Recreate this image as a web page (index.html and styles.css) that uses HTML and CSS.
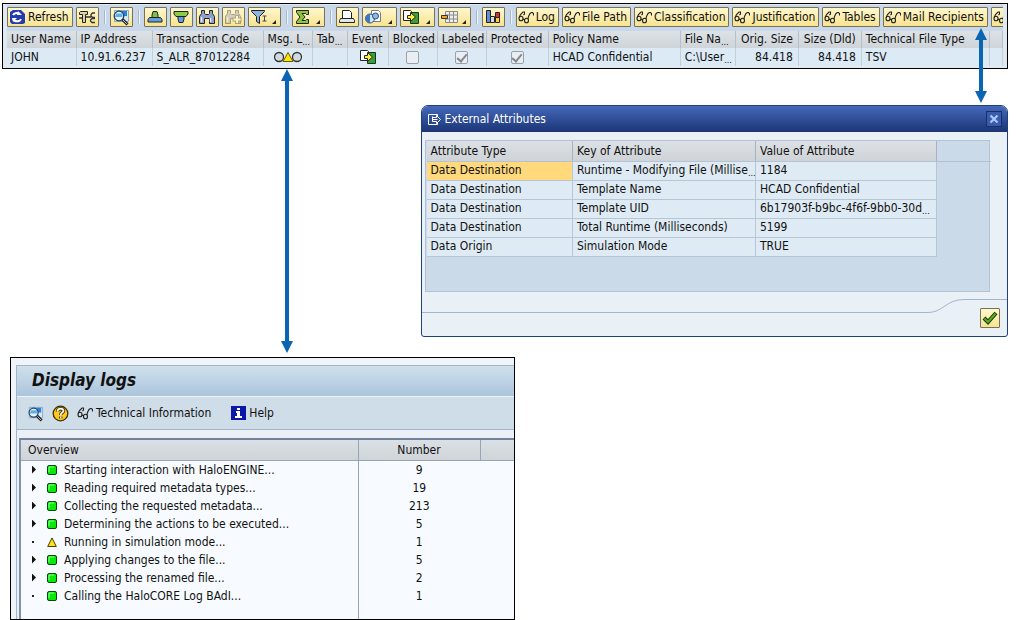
FILE: index.html
```
<!DOCTYPE html>
<html lang="en">
<head>
    <meta charset="UTF-8">
    <title>Display logs</title>
    <link rel="stylesheet" href="styles.css">
</head>
<body>
<!-- shared icons -->
<svg class="sprite" width="0" height="0">
    <symbol id="glasses" viewBox="0 0 16 14">
        <g fill="none" stroke="#222" stroke-width="1.1">
            <ellipse cx="3" cy="8.500" rx="2" ry="2.300"/>
            <ellipse cx="8.500" cy="10.500" rx="2" ry="2.300"/>
            <path d="M5 9l1.500 1M1.200 7.500l1.300-3 2.500-2.500h1.500v2l-1 1M10 9l.5-2.500 1.500-3 1.500-1h1l1 1v2"/>
        </g>
    </symbol>
    <symbol id="lens" viewBox="0 0 18 18">
        <path d="M2.500 2.500h14v11h-14z" fill="#d6e6f4" stroke="#8fa6bd"/>
        <path d="M5 3h10v5H5z" fill="#1f86dc"/>
        <circle cx="7" cy="8" r="4.800" fill="#e3f3ff" stroke="#2a4260" stroke-width="1.300"/>
        <path d="M4 5.500h6.500V9H3z" fill="#5cb0ec"/>
        <path d="M10.500 11.500l5 5" stroke="#222" stroke-width="3"/>
        <path d="M11 12l4 4" stroke="#b8c4d0"/>
    </symbol>
    <symbol id="export" viewBox="0 0 18 16">
        <path d="M8.500 3.500h8v11h-8z" fill="#3f9a3f" stroke="#123a12"/>
        <path d="M1.500 1.500h7l1 1v9h-8z" fill="#fff" stroke="#222"/>
        <path d="M5.500 6.500h3v-3l5 4.500-5 4.500v-3h-3z" fill="#ffef3a" stroke="#222"/>
    </symbol>
    <symbol id="binoculars" viewBox="0 0 18 16">
        <path d="M3.500 1.500h3v3l1 1h3l1-1v-3h3v3l2 3v7h-5v-5h-5v5h-5v-7l2-3z" fill="#8f9fd0" stroke="#222"/>
        <path d="M3.500 8v5M12.500 9v4" stroke="#e8ecfb" stroke-width="1.500"/>
    </symbol>
    <symbol id="green" viewBox="0 0 10 10">
        <rect x=".5" y=".5" width="9" height="9" rx="1.500" fill="#0be80b" stroke="#064a06"/>
        <path d="M2 7V2h5" fill="none" stroke="#8dff8d"/>
    </symbol>
    <symbol id="warn" viewBox="0 0 10 10">
        <path d="M5 .9l4.300 8.600H.7z" fill="#ffe11a" stroke="#4a3d00"/>
    </symbol>
    <symbol id="more" viewBox="0 0 6 4">
        <path d="M5 0v4H1z" fill="#222"/>
    </symbol>
</svg>

<main class="page">
    <section class="alv">
        <div class="toolbar">
            <button class="btn refresh"><svg width="17" height="16"><path d="M1 3l3-2h8l4 4v9l-2 1H3l-2-2z" fill="#243bb0"/><path d="M4 6c1-2 4-2.500 6-1M12 10c-1 2.500-4 3-7 1.500" fill="none" stroke="#fff" stroke-width="2"/><path d="M9 2l4 4H8zM3 9l5 0-4 4z" fill="#fff"/></svg>Refresh</button>
            <button class="btn icon" aria-label="Settings"><svg width="18" height="16"><path d="M1.500 3.500l1-1h7v3h-2v8h-3v-8h-3z" fill="#d9d3a8" stroke="#222"/><path d="M17 4h-2.500L13 5.500V7l1.500 1.500H17M17 9.500h-3L12.500 11v1l1.500 1.500h3M8 8h5M1 9h3" fill="none" stroke="#333" stroke-width="1.300"/></svg></button>
            <span class="sep"></span>
            <button class="btn icon" aria-label="Details"><svg width="18" height="18"><use href="#lens"/></svg></button>
            <span class="sep"></span>
            <button class="btn icon" aria-label="Sort ascending"><svg width="18" height="16"><path d="M7 2.500h4l1 3.500v2.500H6V6z" fill="#7cc142" stroke="#222"/><path d="M3.500 8.500h11l1.500 2v2.500H2v-2.500z" fill="#5f9fe0" stroke="#222"/></svg></button>
            <button class="btn icon" aria-label="Sort descending"><svg width="18" height="16"><path d="M2 2.500h14V5l-2 2.500H4L2 5z" fill="#8ccb45" stroke="#222"/><path d="M6 7.500h6V10l-1 3.500H7L6 10z" fill="#5f9fe0" stroke="#222"/></svg></button>
            <button class="btn icon" aria-label="Find"><svg width="18" height="16"><use href="#binoculars"/></svg></button>
            <button class="btn icon" aria-label="Find next" disabled><svg width="18" height="16"><use href="#binoculars"/><path d="M13 6v9M8.500 10.500h9" stroke="#444" stroke-width="4"/><path d="M13 7v7M9.500 10.500h7" stroke="#fff" stroke-width="2"/></svg></button>
            <button class="btn menu" aria-label="Filter"><svg width="18" height="16"><path d="M1.500 1.500h13v1l-5 5v7l-3-2v-5l-5-5z" fill="#8fb5dc" stroke="#222"/><path d="M12.500 7h4M14.500 7v5M12.500 12h4" stroke="#444"/></svg><svg class="more" width="6" height="4"><use href="#more"/></svg></button>
            <span class="sep"></span>
            <button class="btn menu" aria-label="Total"><svg width="18" height="16"><path d="M2.500 1.500h12v4h-2l-1-1H8l3 3.500-3 3.500h3.500l1-1h2v4h-12v-2L6 8 2.500 3.500z" fill="#8cc63a" stroke="#222"/></svg><svg class="more" width="6" height="4"><use href="#more"/></svg></button>
            <span class="sep"></span>
            <button class="btn icon" aria-label="Print"><svg width="18" height="16"><path d="M4.500 1.500h7l2 2v6h-9z" fill="#fff" stroke="#222"/><path d="M2.500 9.500h13l1 2v2h-15v-2z" fill="#dfe8f2" stroke="#222"/></svg></button>
            <button class="btn menu wide" aria-label="Views"><svg width="18" height="16"><path d="M7.500 1.500h7l2 2v9h-9z" fill="#fff" stroke="#778"/><circle cx="6" cy="9.500" r="4.500" fill="#d3e8fa" stroke="#2c4f80"/><path d="M6 5v9a4.500 4.500 0 0 1 0-9z" fill="#3c78c8"/><circle cx="11.500" cy="7" r="3" fill="#8cbbe6" stroke="#2c4f80"/></svg><svg class="more" width="6" height="4"><use href="#more"/></svg></button>
            <button class="btn menu wide" aria-label="Export"><svg width="18" height="16"><use href="#export"/></svg><svg class="more" width="6" height="4"><use href="#more"/></svg></button>
            <button class="btn menu" aria-label="Layout"><svg width="18" height="16"><path d="M5.500 2.500h12v11h-12zM5.500 6h12M5.500 10h12M9.500 2v11M13.500 2v11" fill="#eee" stroke="#8a8a8a"/><path d="M1.500 6.500h6v3h-6z" fill="#f5a623" stroke="#333"/></svg><svg class="more" width="6" height="4"><use href="#more"/></svg></button>
            <span class="sep"></span>
            <button class="btn icon" aria-label="Graphic"><svg width="18" height="16"><path d="M2.500 1.500h4v12h-4z" fill="#5b8fd6" stroke="#222"/><path d="M6.500 7.500h4v6h-4z" fill="#d6dce6" stroke="#222"/><path d="M11.500 3.500h4v5h-4z" fill="#d9302a" stroke="#222"/><path d="M11.500 8.500h4v5h-4z" fill="#ffd23a" stroke="#222"/></svg></button>
            <span class="sep"></span>
            <button class="btn"><svg width="16" height="14"><use href="#glasses"/></svg>Log</button>
            <button class="btn"><svg width="16" height="14"><use href="#glasses"/></svg>File Path</button>
            <button class="btn"><svg width="16" height="14"><use href="#glasses"/></svg>Classification</button>
            <button class="btn"><svg width="16" height="14"><use href="#glasses"/></svg>Justification</button>
            <button class="btn"><svg width="16" height="14"><use href="#glasses"/></svg>Tables</button>
            <button class="btn"><svg width="16" height="14"><use href="#glasses"/></svg>Mail Recipients</button>
            <button class="btn" aria-label="More"><svg width="16" height="14"><use href="#glasses"/></svg></button>
        </div>
        <table class="list">
            <colgroup>
                <col class="c-user"><col class="c-ip"><col class="c-code"><col class="c-msg"><col class="c-tab">
                <col class="c-event"><col class="c-check"><col class="c-check"><col class="c-prot"><col class="c-policy">
                <col class="c-file"><col class="c-size"><col class="c-size"><col class="c-type"><col class="c-end">
            </colgroup>
            <thead>
                <tr>
                    <th>User Name</th><th>IP Address</th><th>Transaction Code</th>
                    <th>Msg. L<span class="dots">...</span></th><th>Tab<span class="dots">...</span></th>
                    <th>Event</th><th>Blocked</th><th>Labeled</th><th>Protected</th><th>Policy Name</th>
                    <th>File Na<span class="dots">...</span></th><th class="num">Orig. Size</th><th class="num">Size (Dld)</th>
                    <th>Technical File Type</th><th></th>
                </tr>
            </thead>
            <tbody>
                <tr>
                    <td>JOHN</td><td>10.91.6.237</td><td>S_ALR_87012284</td>
                    <td class="mid"><svg width="30" height="12"><circle cx="6" cy="6" r="4.500" fill="#d5d9df" stroke="#333" stroke-width="1.300"/><circle cx="24" cy="6" r="4.500" fill="#d5d9df" stroke="#333" stroke-width="1.300"/><path d="M15 1.500l5 9H10z" fill="#ffe600" stroke="#6b5d00"/></svg></td>
                    <td></td>
                    <td class="mid"><svg width="18" height="16"><use href="#export"/></svg></td>
                    <td class="mid"><input type="checkbox" aria-label="Blocked" disabled></td>
                    <td class="mid"><input type="checkbox" aria-label="Labeled" checked disabled></td>
                    <td class="mid"><input type="checkbox" aria-label="Protected" checked disabled></td>
                    <td>HCAD Confidential</td><td>C:\User<span class="dots">...</span></td>
                    <td class="num">84.418</td><td class="num">84.418</td><td>TSV</td><td></td>
                </tr>
            </tbody>
        </table>
    </section>

    <section class="dialog">
        <div class="dialog-title">
            <svg width="16" height="13"><path d="M10.500 3V1.500h-9v10h9V10M5.500 3.500v5h4v2l4-4-4-4v2h-4M5.500 6.500h5" fill="none" stroke="#fff"/></svg>
            <span>External Attributes</span>
            <button class="close" aria-label="Close"><svg width="10" height="10"><path d="M1.500 1.500l7 7M8.500 1.500l-7 7" stroke="#a9c8ff" stroke-width="2.200"/></svg></button>
        </div>
        <div class="dialog-body">
            <div class="attrs-frame">
                <table class="attrs">
                    <colgroup><col class="a-type"><col class="a-key"><col class="a-value"><col class="a-rest"></colgroup>
                    <thead>
                        <tr><th>Attribute Type</th><th>Key of Attribute</th><th>Value of Attribute</th><td class="rest"></td></tr>
                    </thead>
                    <tbody>
                        <tr><td class="selected">Data Destination</td><td>Runtime - Modifying File (Millise<span class="dots">...</span></td><td>1184</td></tr>
                        <tr><td>Data Destination</td><td>Template Name</td><td>HCAD Confidential</td></tr>
                        <tr><td>Data Destination</td><td>Template UID</td><td>6b17903f-b9bc-4f6f-9bb0-30d<span class="dots">...</span></td></tr>
                        <tr><td>Data Destination</td><td>Total Runtime (Milliseconds)</td><td>5199</td></tr>
                        <tr><td>Data Origin</td><td>Simulation Mode</td><td>TRUE</td></tr>
                    </tbody>
                </table>
            </div>
        </div>
        <div class="dialog-foot">
            <div class="foot-line"></div>
            <svg width="36" height="14"><path d="M0 13.500C15 13.500 18 .5 36 .5" fill="none" stroke="#a3b4cf"/></svg>
            <div class="foot-end">
                <button class="btn ok" aria-label="Continue"><svg width="16" height="14"><path d="M2 7l4 4 8-9" fill="none" stroke="#10300a" stroke-width="4"/><path d="M2.500 7.500L6 11l7.500-8.500" fill="none" stroke="#5cae1c" stroke-width="2"/></svg></button>
            </div>
        </div>
    </section>

    <section class="logs">
        <div class="logs-inner">
            <h1>Display logs</h1>
            <div class="logs-tools">
                <button class="flat" aria-label="Details"><svg width="17" height="17"><use href="#lens"/></svg></button>
                <button class="flat" aria-label="Long text"><svg width="17" height="17"><circle cx="8.500" cy="8.500" r="7.300" fill="#ffc91f" stroke="#3b3000" stroke-width="1.300"/><path d="M5.500 6.500c0-4 6.500-3.500 6-.5-.3 1.700-2.800 1.500-2.800 4M8.700 11.500v2" fill="none" stroke="#3b3000" stroke-width="3.500"/><path d="M5.500 6.500c0-4 6.500-3.500 6-.5-.3 1.700-2.800 1.500-2.800 4M8.700 11.500v2" fill="none" stroke="#fff" stroke-width="1.700"/></svg></button>
                <button class="flat tech"><svg width="16" height="14"><use href="#glasses"/></svg>Technical Information</button>
                <button class="flat"><svg width="15" height="14"><path d="M0 0h15v14H0z" fill="#0b17a8"/><path d="M6 2h3v2H6zM5 5h4v5h2v2H4v-2h2V7H5z" fill="#fff"/></svg>Help</button>
            </div>
            <div class="tree-frame">
                <table class="tree">
                    <colgroup><col class="t-text"><col class="t-num"><col class="t-rest"></colgroup>
                    <thead>
                        <tr><th>Overview</th><th class="count">Number</th><th></th></tr>
                    </thead>
                    <tbody>
                        <tr><td><div class="node"><i class="arrow"></i><svg width="10" height="10"><use href="#green"/></svg>Starting interaction with HaloENGINE...</div></td><td class="count">9</td><td></td></tr>
                        <tr><td><div class="node"><i class="arrow"></i><svg width="10" height="10"><use href="#green"/></svg>Reading required metadata types...</div></td><td class="count">19</td><td></td></tr>
                        <tr><td><div class="node"><i class="arrow"></i><svg width="10" height="10"><use href="#green"/></svg>Collecting the requested metadata...</div></td><td class="count">213</td><td></td></tr>
                        <tr><td><div class="node"><i class="arrow"></i><svg width="10" height="10"><use href="#green"/></svg>Determining the actions to be executed...</div></td><td class="count">5</td><td></td></tr>
                        <tr><td><div class="node"><i class="leaf"></i><svg width="10" height="10"><use href="#warn"/></svg>Running in simulation mode...</div></td><td class="count">1</td><td></td></tr>
                        <tr><td><div class="node"><i class="arrow"></i><svg width="10" height="10"><use href="#green"/></svg>Applying changes to the file...</div></td><td class="count">5</td><td></td></tr>
                        <tr><td><div class="node"><i class="arrow"></i><svg width="10" height="10"><use href="#green"/></svg>Processing the renamed file...</div></td><td class="count">2</td><td></td></tr>
                        <tr><td><div class="node"><i class="leaf"></i><svg width="10" height="10"><use href="#green"/></svg>Calling the HaloCORE Log BAdI...</div></td><td class="count">1</td><td></td></tr>
                        <tr class="fill"><td></td><td></td><td></td></tr>
                    </tbody>
                </table>
            </div>
        </div>
    </section>

    <!-- connectors between the windows -->
    <svg class="link link-logs" width="12" height="284"><path d="M6 0l6 12H8v260h4l-6 12-6-12h4V12H0z" fill="#0a66b2"/></svg>
    <svg class="link link-attrs" width="12" height="75"><path d="M6 0l6 12H8v51h4l-6 12-6-12h4V12H0z" fill="#0a66b2"/></svg>
</main>
</body>
</html>
```
FILE: styles.css
```
*{
    box-sizing: border-box;
    margin: 0;
    padding: 0;
}
body{
    background: #fff;
    color: #111;
    font: 12px/18px "DejaVu Sans Condensed", "Noto Sans", sans-serif;
}
button{
    font: inherit;
    color: inherit;
}
svg{
    display: block;
    flex: none;
}
table{
    width: 100%;
    border-collapse: collapse;
    table-layout: fixed;
}
th{
    font-weight: normal;
    text-align: left;
}
th, td{
    overflow: hidden;
    white-space: nowrap;
}
.sprite{
    position: absolute;
}
.page{
    position: relative;
    padding: 3px 9px 0 2px;
}
.dots{
    font-size: 9px;
    line-height: 9px;
    vertical-align: -2px;
}

/* output list */
.alv{
    border: 1px solid #000;
    padding: 1px 4px 2px;
    background: #dfe9f2;
}
.toolbar{
    display: flex;
    gap: 3px;
    padding: 2px 0 4px;
    background: #c8d8ea;
    overflow: hidden;
}
.btn{
    display: flex;
    flex: none;
    align-items: center;
    gap: 2px;
    height: 20px;
    padding: 0 3px 0 1px;
    border: 1px solid #77715a;
    border-radius: 1px;
    background: linear-gradient(#fff8cf, #f7e38f);
    white-space: nowrap;
}
.icon{
    width: 23px;
}
.btn:disabled svg{
    opacity: .4;
}
.menu{
    width: 33px;
}
.wide{
    width: 35px;
}
.more{
    margin: 10px 0 0 auto;
}
.sep{
    flex: none;
    width: 5px;
    height: 14px;
    margin-top: 3px;
    background: linear-gradient(90deg, transparent 2px, #a9b7c8 2px, #a9b7c8 3px, #eef4fa 3px, #eef4fa 4px, transparent 4px);
}
.list th{
    height: 17px;
    padding: 0 4px;
    border-right: 1px solid #b5c0cc;
    background: linear-gradient(#dde2e7, #cfd4d8);
    line-height: 17px;
}
.list td{
    height: 18px;
    padding: 0 4px;
    border-right: 1px solid #c3cfdb;
    background: #dceaf5;
    line-height: 17px;
}
.list th, .list td{
    padding-right: 0;
}
.list .num{
    padding-right: 5px;
    text-align: right;
}
.list .mid{
    padding: 0;
    text-align: center;
}
.mid svg{
    margin: 0 auto;
}
.mid input{
    display: block;
    appearance: none;
    width: 13px;
    height: 13px;
    margin: 0 auto;
    border: 1px solid #9aa0a6;
    border-radius: 2px;
    background: #e9eff4;
}
.mid input:checked::after{
    content: "";
    display: block;
    width: 4px;
    height: 8px;
    margin: 0 auto;
    border: solid #85898d;
    border-width: 0 2px 2px 0;
    transform: rotate(40deg);
}
.c-user{ width: 69px; }
.c-ip{ width: 76px; }
.c-code{ width: 111px; }
.c-msg{ width: 49px; }
.c-tab{ width: 35px; }
.c-event{ width: 41px; }
.c-check{ width: 49px; }
.c-prot{ width: 62px; }
.c-policy{ width: 132px; }
.c-file{ width: 55px; }
.c-size{ width: 63px; }
.c-type{ width: 128px; }
.c-end{ width: 13px; }

/* attributes dialog */
.dialog{
    width: 58.4%;
    margin: 36px 0 0 auto;
    border: 1px solid #1f3f7d;
    border-radius: 7px 7px 3px 3px;
    background: #e9f0f6;
    overflow: hidden;
}
.dialog-title{
    display: flex;
    align-items: center;
    gap: 2px;
    height: 26px;
    padding: 0 5px;
    background: linear-gradient(#4468ba, #1b3576);
    color: #fff;
}
.close{
    display: flex;
    align-items: center;
    justify-content: center;
    width: 16px;
    height: 16px;
    margin-left: auto;
    border: 1px solid #16306c;
    background: #3a5ba8;
}
.dialog-body{
    padding: 8px 17px 7px 3px;
}
.attrs-frame{
    height: 152px;
    padding-left: 1px;
    border: 1px solid #b2c1d3;
    background: #cbdae9;
}
.attrs th{
    height: 20px;
    padding: 1px 4px 0;
    border-right: 1px solid #a9b3bf;
    border-bottom: 1px solid #b7c3d0;
    background: linear-gradient(#dce1e6, #cfd3d7);
    line-height: 18px;
}
.attrs .rest{
    height: 20px;
    border: 0;
    border-bottom: 1px solid #b2c1d3;
    background: none;
}
.attrs td{
    height: 19px;
    padding: 0 0 2px 4px;
    border-right: 1px solid #b7c5d5;
    border-bottom: 1px solid #b7c5d5;
    background: #deeaf4;
    line-height: 16px;
}
.attrs .selected{
    background: #ffd97b;
}
.a-type{ width: 146px; }
.a-key{ width: 183px; }
.a-value{ width: 181px; }
.a-rest{ width: 54px; }
.dialog-foot{
    display: flex;
    height: 37px;
}
.foot-line{
    flex: 1;
    height: 14px;
    border-bottom: 1px solid #a3b4cf;
}
.foot-end{
    padding: 8px 7px 0 16px;
    border-top: 1px solid #a3b4cf;
}
.ok{
    width: 20px;
}

/* log window */
.logs{
    width: 50.2%;
    margin: 20px 0 0 8px;
    padding: 7px 0 0 5px;
    border: 1px solid #000;
    background: #eff4f9;
}
.logs-inner{
    border-top: 1px solid #a3b5c8;
    border-left: 1px solid #a3b5c8;
    background: #eaf0f6;
}
.logs h1{
    height: 30px;
    padding-left: 15px;
    background: linear-gradient(#d0e0ec, #abc5dc);
    font: italic bold 17px/28px "DejaVu Sans Condensed", "Noto Sans", sans-serif;
}
.logs-tools{
    display: flex;
    align-items: center;
    gap: 8px;
    height: 34px;
    padding-left: 10px;
    border-top: 1px solid #eef4f9;
    border-bottom: 1px solid #a3b5c8;
    background: #cfdde8;
}
.flat{
    display: flex;
    align-items: center;
    gap: 3px;
    border: 0;
    background: none;
}
.tech{
    margin-right: 12px;
}
.tree-frame{
    margin: 8px 0 0 2px;
    border-top: 2px solid #6f8299;
    border-left: 2px solid #7f92a8;
    background: #f7fbff;
}
.tree th{
    height: 20px;
    padding: 1px 7px 0;
    border-right: 1px solid #98a5b6;
    border-bottom: 1px solid #98a5b6;
    background: linear-gradient(#dbe0e6, #cfd4d8);
}
.tree td{
    height: 18px;
    border-right: 1px solid #98a5b6;
}
.tree td + td, .tree th + th + th{
    border-right: 0;
}
.tree .fill td{
    height: 14px;
}
.tree .count{
    padding-left: 0;
    padding-right: 0;
    text-align: center;
}
.node{
    display: flex;
    align-items: center;
    gap: 7px;
    padding-left: 11px;
}
.arrow{
    width: 8px;
    height: 8px;
    background: linear-gradient(#111, #111);
    clip-path: polygon(0 0, 4px 4px, 0 8px);
}
.leaf{
    width: 8px;
    height: 2px;
    background: linear-gradient(90deg, #222 2px, transparent 2px);
}
.t-text{ width: 337px; }
.t-num{ width: 122px; }
.t-rest{ width: 34px; }

/* connectors */
.link{
    position: absolute;
}
.link-logs{
    top: 69px;
    left: 281px;
}
.link-attrs{
    top: 28px;
    right: 30px;
}
```
